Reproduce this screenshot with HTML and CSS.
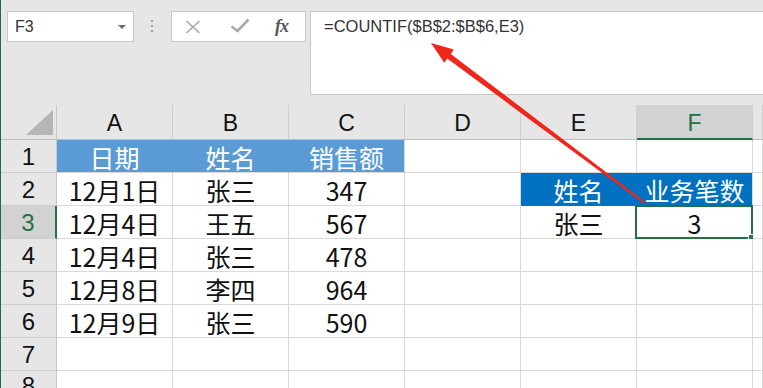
FILE: index.html
```html
<!DOCTYPE html>
<html lang="zh">
<head>
<meta charset="utf-8">
<title>COUNTIF</title>
<link rel="stylesheet" href="styles.css">
</head>
<body>
<div class="app">
  <div class="toolbar">
    <div class="namebox">
      <span class="nb-text">F3</span>
      <svg class="nb-drop" width="8" height="4" viewBox="0 0 8 4"><path d="M0 0H8L4 4Z" fill="#6b6b6b"/></svg>
    </div>
    <div class="grip"><i></i><i></i><i></i></div>
    <div class="fxbox">
      <svg class="ico-x" width="16" height="14" viewBox="0 0 16 14"><path d="M1.5 1L14.5 13M14.5 1L1.5 13" stroke="#a9a9a9" stroke-width="1.6" fill="none"/></svg>
      <svg class="ico-ok" width="20" height="16" viewBox="0 0 20 16"><path d="M1.5 8.5L7.5 13L18.5 1.5" stroke="#a9a9a9" stroke-width="2.6" fill="none"/></svg>
      <span class="fx">fx</span>
    </div>
    <div class="formula">=COUNTIF($B$2:$B$6,E3)</div>
  </div>

  <div class="sheet">
    <div class="corner"><svg width="27" height="25" viewBox="0 0 27 25"><path d="M27 0V25H0Z" fill="#b5b5b5"/></svg></div>
    <div class="ch">A</div><div class="ch">B</div><div class="ch">C</div><div class="ch">D</div><div class="ch">E</div><div class="ch ch-sel">F</div><div class="ch"></div>

    <div class="rh">1</div>
    <div class="c f1">日期</div><div class="c f1">姓名</div><div class="c f1 f1-end">销售额</div><div class="c"></div><div class="c"></div><div class="c"></div><div class="c"></div>

    <div class="rh">2</div>
    <div class="c">12月1日</div><div class="c">张三</div><div class="c">347</div><div class="c"></div><div class="c f2">姓名</div><div class="c f2 f2-end">业务笔数</div><div class="c"></div>

    <div class="rh rh-sel">3</div>
    <div class="c">12月4日</div><div class="c">王五</div><div class="c">567</div><div class="c"></div><div class="c">张三</div><div class="c c-sel">3<span class="sel-box"></span><span class="handle"></span></div><div class="c"></div>

    <div class="rh">4</div>
    <div class="c">12月4日</div><div class="c">张三</div><div class="c">478</div><div class="c"></div><div class="c"></div><div class="c"></div><div class="c"></div>

    <div class="rh">5</div>
    <div class="c">12月8日</div><div class="c">李四</div><div class="c">964</div><div class="c"></div><div class="c"></div><div class="c"></div><div class="c"></div>

    <div class="rh">6</div>
    <div class="c">12月9日</div><div class="c">张三</div><div class="c">590</div><div class="c"></div><div class="c"></div><div class="c"></div><div class="c"></div>

    <div class="rh">7</div>
    <div class="c"></div><div class="c"></div><div class="c"></div><div class="c"></div><div class="c"></div><div class="c"></div><div class="c"></div>

    <div class="rh rh-last">8</div>
    <div class="c"></div><div class="c"></div><div class="c"></div><div class="c"></div><div class="c"></div><div class="c"></div><div class="c"></div>
  </div>

  <svg class="arrow" width="763" height="388" viewBox="0 0 763 388">
    <path d="M431 43L453.8 49.6L450.8 54L645.6 202.3L644.4 203.9L447.2 58.6L444.2 62.8Z" fill="#f0261b"/>
  </svg>
</div>
</body>
</html>
```

FILE: styles.css
```css
html, body {
  margin: 0;
  padding: 0;
}
body {
  background: #e6e6e6;
}
.app {
  position: relative;
  width: 763px;
  height: 388px;
  overflow: hidden;
  background: #e6e6e6;
  border-left: 1px solid #1e6b45;
  box-sizing: border-box;
}

/* ---------- formula toolbar ---------- */
.toolbar {
  display: flex;
  align-items: flex-start;
  height: 105px;
  padding: 11px 0 0 6px;
  box-sizing: border-box;
}
.namebox {
  width: 127px;
  height: 31px;
  box-sizing: border-box;
  background: #fff;
  border: 1px solid #c6c6c6;
  display: flex;
  align-items: center;
  justify-content: space-between;
  padding: 0 7px 0 7px;
}
.nb-text {
  font-family: "Liberation Sans", Arial, sans-serif;
  font-size: 16px;
  color: #333;
}
.nb-drop {
  margin-top: 1px;
}
.grip {
  width: 4px;
  margin: 9px 16px 0 17px;
  display: flex;
  flex-direction: column;
  gap: 3px;
}
.grip i {
  display: block;
  width: 2px;
  height: 2px;
  background: #a0a0a0;
}
.fxbox {
  width: 135px;
  height: 31px;
  box-sizing: border-box;
  background: #fff;
  border: 1px solid #c6c6c6;
  display: flex;
  align-items: center;
  padding-left: 13px;
}
.ico-x {
  margin-right: 29px;
}
.ico-ok {
  margin-right: 25px;
  margin-top: -1px;
}
.fx {
  font-family: "Liberation Serif", "Times New Roman", serif;
  font-style: italic;
  font-weight: bold;
  font-size: 18px;
  color: #555;
  letter-spacing: -1px;
}
.formula {
  margin-left: 4px;
  flex: 1;
  height: 84px;
  box-sizing: border-box;
  background: #fff;
  border: 1px solid #c6c6c6;
  border-right: none;
  padding: 5px 0 0 13px;
  font-family: "Liberation Sans", Arial, sans-serif;
  font-size: 16.5px;
  color: #333;
  white-space: nowrap;
}

/* ---------- sheet grid ---------- */
.sheet {
  display: grid;
  grid-template-columns: 56px repeat(6, 116px) 1fr;
  grid-template-rows: 35px repeat(8, 33px);
  background: #fff;
}
.corner {
  background: #e6e6e6;
  border-right: 1px solid #c8c8c8;
  border-bottom: 1px solid #bdbdbd;
  display: flex;
  align-items: flex-end;
  justify-content: flex-end;
  padding: 0 3px 4px 0;
}
.ch {
  background: #e6e6e6;
  border-right: 1px solid #cfcfcf;
  border-bottom: 1px solid #bdbdbd;
  display: flex;
  align-items: center;
  justify-content: center;
  padding-top: 3px;
  font-family: "Liberation Sans", Arial, sans-serif;
  font-size: 23px;
  color: #111;
}
.ch-sel {
  background: #d2d2d2;
  color: #217346;
  border-bottom: 2px solid #217346;
}
.rh {
  background: #e6e6e6;
  border-right: 1px solid #c8c8c8;
  border-bottom: 1px solid #cdcdcd;
  display: flex;
  align-items: center;
  justify-content: center;
  padding-top: 2px;
  font-family: "Liberation Sans", Arial, sans-serif;
  font-size: 24px;
  color: #111;
}
.rh-last {
  align-items: flex-start;
  padding-top: 3px;
  line-height: 1;
}
.rh-sel {
  background: #d2d2d2;
  color: #217346;
  border-right: 2px solid #217346;
}
.c {
  position: relative;
  background: #fff;
  border-right: 1px solid #d9d9d9;
  border-bottom: 1px solid #d9d9d9;
  display: flex;
  align-items: center;
  justify-content: center;
  padding-top: 2px;
  font-family: "Noto Sans CJK SC", "Liberation Sans", sans-serif;
  font-size: 25px;
  color: #111;
  white-space: nowrap;
}
.f1 {
  background: #5b9bd5;
  border-right-color: #5b9bd5;
  color: #fff;
}
.f1-end {
  border-right-color: #d9d9d9;
}
.f2 {
  background: #0070c0;
  border-right-color: #0070c0;
  border-bottom-color: #0070c0;
  color: #fff;
}
.f2-end {
  border-right-color: #d9d9d9;
}
.sel-box {
  position: absolute;
  left: -2px;
  top: -1px;
  right: -1px;
  bottom: -1px;
  border: 2px solid #217346;
  pointer-events: none;
}
.handle {
  position: absolute;
  right: -4px;
  bottom: -4px;
  width: 6px;
  height: 6px;
  background: #217346;
  border: 1px solid #fff;
}

/* ---------- annotation arrow ---------- */
.arrow {
  position: absolute;
  left: -1px;
  top: 0;
  pointer-events: none;
}
```
